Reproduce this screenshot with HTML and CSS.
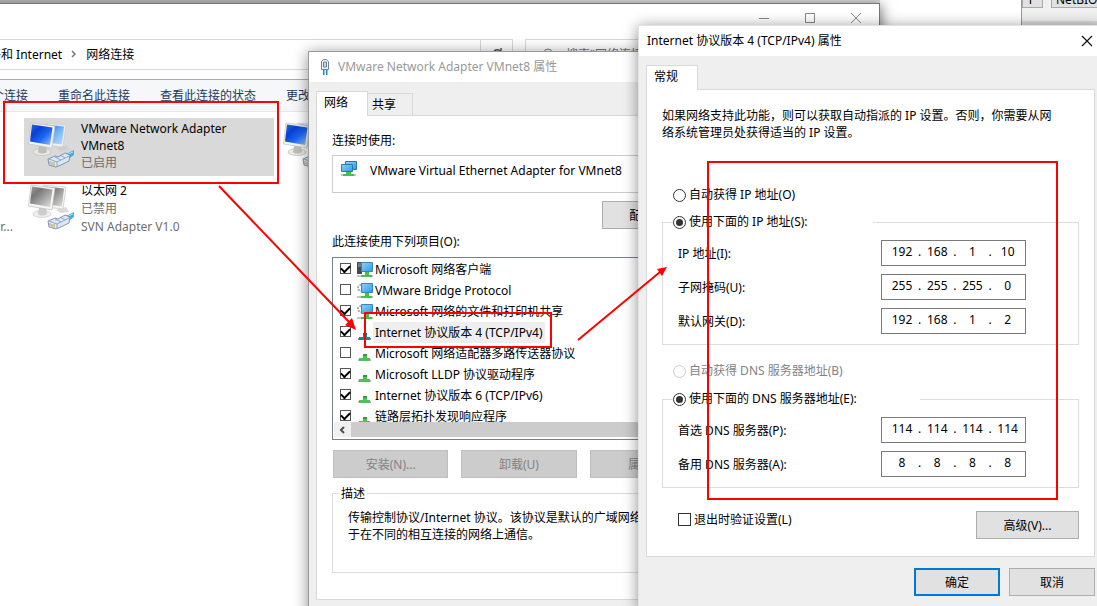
FILE: index.html
```html
<!DOCTYPE html>
<html lang="zh-CN">
<head>
<meta charset="utf-8">
<title>网络连接</title>
<link rel="stylesheet" href="styles.css">
</head>
<body>
<svg class="defs" width="0" height="0" aria-hidden="true">
  <defs>
    <linearGradient id="blue" x1="0" y1="0" x2="1" y2="1"><stop offset="0" stop-color="#2a6cf0"/><stop offset=".3" stop-color="#0a3fd0"/><stop offset=".6" stop-color="#1b66f5"/><stop offset="1" stop-color="#9acbff"/></linearGradient>
    <linearGradient id="blue2" x1="0" y1="0" x2="1" y2="1"><stop offset="0" stop-color="#0b55e6"/><stop offset=".5" stop-color="#6db0fb"/><stop offset="1" stop-color="#c5e2ff"/></linearGradient>
    <linearGradient id="gray" x1="0" y1="0" x2="1" y2="1"><stop offset="0" stop-color="#a0a0a0"/><stop offset=".3" stop-color="#777"/><stop offset=".6" stop-color="#a5a5a5"/><stop offset="1" stop-color="#e2e2e2"/></linearGradient>
    <linearGradient id="sky" x1="0" y1="0" x2="1" y2="1"><stop offset="0" stop-color="#8ed2fa"/><stop offset="1" stop-color="#2a9be8"/></linearGradient>
    <symbol id="plug" viewBox="0 0 28 18">
      <path d="M17 5l10-5v5l-6 4z" fill="#3fb2dc"/><path d="M19 5l7-3" stroke="#a7e5f7"/>
      <path d="M1 9l7-3 3 1 7-4 5 2-1 6-8 4-5 2-7-2z" fill="#dce6f5" stroke="#6680a6" stroke-width=".8"/>
      <path d="M2 9l8 3v4M10 12l12-6M8 7l6 3M13 5l5 3" fill="none" stroke="#7d97bd" stroke-width=".8"/>
      <path d="M3 11v3M5 12v3M7 12v4" stroke="#c4a94c"/>
    </symbol>
    <symbol id="pc-on" viewBox="0 0 48 46">
      <path d="M28 26l5 3 8-1-3-5z" fill="#cfcfcf"/>
      <path d="M15 1l23 2-3 22-18-2z" fill="#f1f1ee" stroke="#c9c9c4" stroke-width=".7"/><path d="M17 2.500l19 2-2 18-15-2z" fill="url(#blue2)"/>
      <ellipse cx="14" cy="30" rx="9" ry="3.500" fill="#e9e9e6" stroke="#bdbdb9" stroke-width=".7"/><path d="M11 24h7l1 6c-3 2-7 2-9 0z" fill="#bebebb"/>
      <path d="M3 1l24 3-3 22L.5 22z" fill="#f3f3f0" stroke="#c2c2bd" stroke-width=".7"/><path d="M4 2.500l20.500 3L22 23 2 19.500z" fill="url(#blue)"/>
      <use href="#plug" x="19" y="28" width="28" height="18"/>
    </symbol>
    <symbol id="pc-off" viewBox="0 0 48 46">
      <path d="M28 26l5 3 8-1-3-5z" fill="#dadada"/>
      <path d="M15 1l23 2-3 22-18-2z" fill="#f6f6f5" stroke="#c5c5c5" stroke-width=".7"/><path d="M17 2.500l19 2-2 18-15-2z" fill="url(#gray)"/>
      <ellipse cx="14" cy="30" rx="9" ry="3.500" fill="#eee" stroke="#c8c8c8" stroke-width=".7"/><path d="M11 24h7l1 6c-3 2-7 2-9 0z" fill="#ccc"/>
      <path d="M3 1l24 3-3 22L.5 22z" fill="#f6f6f5" stroke="#bbb" stroke-width=".7"/><path d="M4 2.500l20.500 3L22 23 2 19.500z" fill="url(#gray)"/>
      <use href="#plug" x="19" y="28" width="28" height="18"/>
    </symbol>
    <symbol id="client" viewBox="0 0 16 16"><path d="M0 0h5v12H0z" fill="#414a50"/><path d="M1 2h3M1 4h3" stroke="#aaa"/><path d="M4.500.5h11v9h-11z" fill="url(#sky)" stroke="#3a85b8"/><path d="M8 10h4v3h3v2H4v-2h4z" fill="#45c04c"/><path d="M0 13h4v2H0zM15 13h1v2h-1z" fill="#c5c5c5"/></symbol>
    <symbol id="service" viewBox="0 0 16 16"><circle cx="4" cy="5" r="3" fill="none" stroke="#a6adb2" stroke-width="2" stroke-dasharray="2 1"/><path d="M4.500.5h11v9h-11z" fill="url(#sky)" stroke="#3a85b8"/><path d="M8 10h4v3h3v2H4v-2h4z" fill="#45c04c"/><path d="M0 13h4v2H0zM15 13h1v2h-1z" fill="#c5c5c5"/></symbol>
    <symbol id="protocol" viewBox="0 0 16 16"><path d="M6 8h4v4h3v3H2v-3h4z" fill="#4cc356"/><path d="M6 8h4v2H6z" fill="#2f9e3b"/><path d="M1 13h1v2H1zM13 13h1v2h-1z" fill="#bbb"/></symbol>
    <symbol id="protocol-sel" viewBox="0 0 16 16"><path d="M6 8h4v4h3v3H2v-3h4z" fill="#168a8c"/><path d="M6 8h4v2H6z" fill="#0a6f7d"/><path d="M1 13h1v2H1zM13 13h1v2h-1z" fill="#7799b5"/></symbol>
    <symbol id="adapter" viewBox="0 0 16 16"><path d="M4.500.5h11v8h-11z" fill="url(#sky)" stroke="#2b78ae"/><path d="M.5 3.500h11v7H.5z" fill="url(#sky)" stroke="#2b78ae"/><path d="M5 11h5v2h3v2H2v-2h3z" fill="#45c04c"/><path d="M0 13h2v2H0zM13 13h2v2h-2z" fill="#c5c5c5"/></symbol>
  </defs>
</svg>

<main class="desktop">
  <section class="back-window">
    <div class="back-main"></div>
    <div class="back-side"><button class="back-button" type="button">P</button><button class="back-button" type="button">NetBIOS</button></div>
  </section>

  <section class="explorer" aria-label="网络连接">
    <header class="explorer-title">
      <button class="caption" type="button" aria-label="最小化"><svg width="12" height="12"><path d="M1 6.500h10" stroke="#888"/></svg></button>
      <button class="caption" type="button" aria-label="最大化"><svg width="12" height="12"><path d="M1.500 1.500h9v9h-9z" fill="none" stroke="#888"/></svg></button>
      <button class="caption" type="button" aria-label="关闭"><svg width="12" height="12"><path d="M1 1l10 10M11 1L1 11" stroke="#888"/></svg></button>
    </header>
    <div class="address-row">
      <nav class="address">
        <a href="#">网络和 Internet</a>
        <svg width="6" height="8"><path d="M1 1l3 3-3 3" fill="none" stroke="#777" stroke-width="1.500"/></svg>
        <a href="#">网络连接</a>
        <button class="refresh" type="button" aria-label="刷新"><svg width="12" height="12"><path d="M10 7a4 4 0 1 1-1-4M10 0v4H6" fill="none" stroke="#555" stroke-width="1.500"/></svg></button>
      </nav>
      <div class="search"><svg width="12" height="14"><circle cx="6" cy="5" r="4" fill="none" stroke="#777"/><path d="M3 8l-3 4" stroke="#777"/></svg><input type="text" aria-label="搜索" placeholder="搜索&quot;网络连接&quot;"></div>
    </div>
    <div class="toolbar"><button type="button">诊断这个连接</button><button type="button">重命名此连接</button><button type="button">查看此连接的状态</button><button type="button">更改此连接的设置</button></div>
    <div class="connections">
      <div class="column column-first"><span class="muted">r...</span></div>
      <div class="column">
        <article class="connection selected"><svg width="48" height="46"><use href="#pc-on"/></svg><div><p>VMware Network Adapter VMnet8</p><p class="muted">已启用</p></div></article>
        <article class="connection"><svg width="48" height="46"><use href="#pc-off"/></svg><div class="spaced"><p>以太网 2</p><p class="muted">已禁用</p><p class="muted">SVN Adapter V1.0</p></div></article>
      </div>
      <div class="column"><article class="connection third"><svg width="48" height="46"><use href="#pc-on"/></svg></article></div>
    </div>
  </section>

  <section class="dialog adapter-dialog" aria-label="VMware Network Adapter VMnet8 属性">
    <header class="title inactive"><svg width="10" height="16"><path d="M1.500 2.500l2-2h3l2 2v8h-7z" fill="#eef3f8" stroke="#6c8298"/><path d="M3.500 3v5h3V3z" fill="#c6d3e0" stroke="#6c8298"/><path d="M3 11h1.500v5H3zM6 11h1.500v5H6z" fill="#1d94bd"/></svg><h2>VMware Network Adapter VMnet8 属性</h2></header>
    <div class="tabs" role="tablist"><button class="tab active" role="tab" type="button">网络</button><button class="tab" role="tab" type="button">共享</button></div>
    <div class="panel adapter-panel">
      <p>连接时使用:</p>
      <div class="adapter-field"><svg width="16" height="16"><use href="#adapter"/></svg><span>VMware Virtual Ethernet Adapter for VMnet8</span></div>
      <button class="button configure" type="button">配置(C)...</button>
      <p class="list-label">此连接使用下列项目(O):</p>
      <div class="list">
        <div class="rows">
          <label class="row"><input type="checkbox" checked><svg width="16" height="16"><use href="#client"/></svg><span>Microsoft 网络客户端</span></label>
          <label class="row"><input type="checkbox"><svg width="16" height="16"><use href="#service"/></svg><span>VMware Bridge Protocol</span></label>
          <label class="row"><input type="checkbox" checked><svg width="16" height="16"><use href="#service"/></svg><span>Microsoft 网络的文件和打印机共享</span></label>
          <label class="row current"><input type="checkbox" checked><svg width="16" height="16"><use href="#protocol-sel"/></svg><span>Internet 协议版本 4 (TCP/IPv4)</span></label>
          <label class="row"><input type="checkbox"><svg width="16" height="16"><use href="#protocol"/></svg><span>Microsoft 网络适配器多路传送器协议</span></label>
          <label class="row"><input type="checkbox" checked><svg width="16" height="16"><use href="#protocol"/></svg><span>Microsoft LLDP 协议驱动程序</span></label>
          <label class="row"><input type="checkbox" checked><svg width="16" height="16"><use href="#protocol"/></svg><span>Internet 协议版本 6 (TCP/IPv6)</span></label>
          <label class="row"><input type="checkbox" checked><svg width="16" height="16"><use href="#protocol"/></svg><span>链路层拓扑发现响应程序</span></label>
        </div>
        <div class="scrollbar"><button type="button" aria-label="向左滚动"><svg width="7" height="8"><path d="M5 1L2 4l3 3" fill="none" stroke="#505050" stroke-width="2"/></svg></button></div>
      </div>
      <div class="list-actions"><button class="button" type="button" disabled>安装(N)...</button><button class="button" type="button" disabled>卸载(U)</button><button class="button" type="button" disabled>属性(R)</button></div>
      <fieldset class="description"><legend>描述</legend><p>传输控制协议/Internet 协议。该协议是默认的广域网络协议，用<br>于在不同的相互连接的网络上通信。</p></fieldset>
    </div>
  </section>

  <section class="dialog ip-dialog" aria-label="Internet 协议版本 4 (TCP/IPv4) 属性">
    <header class="title"><h2>Internet 协议版本 4 (TCP/IPv4) 属性</h2><button class="caption" type="button" aria-label="关闭"><svg width="12" height="12"><path d="M1 1l10 10M11 1L1 11" stroke="#111" stroke-width="1.200"/></svg></button></header>
    <div class="tabs" role="tablist"><button class="tab active" role="tab" type="button">常规</button></div>
    <div class="panel ip-panel">
      <p class="intro">如果网络支持此功能，则可以获取自动指派的 IP 设置。否则，你需要从网络系统管理员处获得适当的 IP 设置。</p>
      <label class="radio first-radio"><input type="radio" name="ip"><span>自动获得 IP 地址(O)</span></label>
      <fieldset class="group">
        <legend class="legend-ip"><label class="radio"><input type="radio" name="ip" checked><span>使用下面的 IP 地址(S):</span></label></legend>
        <div class="field"><label for="ip1">IP 地址(I):</label><div class="octets"><input id="ip1" value="192">.<input aria-label="IP 2" value="168">.<input aria-label="IP 3" value="1">.<input aria-label="IP 4" value="10"></div></div>
        <div class="field"><label for="mask1">子网掩码(U):</label><div class="octets"><input id="mask1" value="255">.<input aria-label="掩码 2" value="255">.<input aria-label="掩码 3" value="255">.<input aria-label="掩码 4" value="0"></div></div>
        <div class="field"><label for="gw1">默认网关(D):</label><div class="octets"><input id="gw1" value="192">.<input aria-label="网关 2" value="168">.<input aria-label="网关 3" value="1">.<input aria-label="网关 4" value="2"></div></div>
      </fieldset>
      <label class="radio dns-radio"><input type="radio" name="dns" disabled><span>自动获得 DNS 服务器地址(B)</span></label>
      <fieldset class="group">
        <legend class="legend-dns"><label class="radio"><input type="radio" name="dns" checked><span>使用下面的 DNS 服务器地址(E):</span></label></legend>
        <div class="field"><label for="dns1">首选 DNS 服务器(P):</label><div class="octets"><input id="dns1" value="114">.<input aria-label="首选 2" value="114">.<input aria-label="首选 3" value="114">.<input aria-label="首选 4" value="114"></div></div>
        <div class="field"><label for="alt1">备用 DNS 服务器(A):</label><div class="octets"><input id="alt1" value="8">.<input aria-label="备用 2" value="8">.<input aria-label="备用 3" value="8">.<input aria-label="备用 4" value="8"></div></div>
      </fieldset>
      <div class="panel-foot"><label class="validate"><input type="checkbox"><span>退出时验证设置(L)</span></label><button class="button" type="button">高级(V)...</button></div>
    </div>
    <footer class="actions"><button class="button primary" type="button">确定</button><button class="button" type="button">取消</button></footer>
  </section>

  <svg class="marks" width="1097" height="606" aria-hidden="true">
    <g fill="none" stroke="#f00" stroke-width="2">
      <path d="M4 102h274v81H4zM365 313h186v34H365zM708 162h349v337H708z"/>
      <path d="M219 186l132 138M578 340l82-68"/>
    </g>
    <path d="M356 330l-11-5 7-7zM667 267l-5 9-5-7z" fill="#f00"/>
  </svg>
</main>
</body>
</html>
```
FILE: styles.css
```css
* { box-sizing: border-box; }
body { margin: 0; font: 12px/17px "Noto Sans", "Noto Sans CJK SC", sans-serif; color: #000; }
p, h2 { margin: 0; font-size: 12px; font-weight: 400; }
button, input { font: inherit; color: inherit; }
button { padding: 0; border: 0; background: none; }
a { color: inherit; text-decoration: none; }
svg { display: block; flex: none; }
fieldset { margin: 0; padding: 0; min-width: 0; border: 1px solid #dcdcdc; }
legend { padding: 0; }
.defs { position: absolute; }
.desktop { position: relative; min-height: 100vh; overflow: hidden; background: #e6e6e0; }

/* windows behind the dialogs */
.back-window { position: absolute; inset: 0; display: flex; background: linear-gradient(90deg, #bdbdbd 320px, #dadada 320px); }
.back-main { flex: 1; margin-left: 880px; background: #fff; border-right: 1px solid #999; }
.back-side { width: 75px; height: 22px; display: flex; gap: 8px; background: #f0f0f0; border-bottom: 1px solid #ddd; overflow: hidden; }
.back-button { width: 21px; height: 18px; margin-top: -10px; flex: none; background: #e1e1e1; border: 1px solid #aaa; }
.back-button + .back-button { width: 90px; padding-left: 4px; text-align: left; }

.explorer { position: absolute; top: 3px; bottom: -10px; left: -52px; right: 217px; background: #fff; border: 1px solid #777; box-shadow: 2px 2px 12px rgba(0, 0, 0, .5); }
.explorer-title { display: flex; justify-content: flex-end; gap: 34px; height: 35px; padding: 8px 17px 0 0; }
.caption { display: block; height: 12px; }
.address-row { display: flex; gap: 12px; height: 31px; }
.address { display: flex; align-items: center; gap: 9px; width: 564px; padding: 0 0 1px 27px; border: 1px solid #d9d9d9; }
.refresh { display: grid; place-items: center; width: 32px; height: 29px; margin-left: auto; border-left: 1px solid #d9d9d9; }
.search { display: flex; flex: 1; align-items: center; gap: 10px; padding-left: 16px; border: 1px solid #d9d9d9; }
.search input { flex: 1; min-width: 0; border: 0; outline: 0; }
.toolbar { display: flex; align-items: center; gap: 30px; height: 33px; margin-top: 9px; padding-left: 7px; background: #f5f7f9; border-top: 1px solid #ababab; border-bottom: 1px solid #e4e6e8; color: #1e395b; overflow: hidden; }
.toolbar button { flex: none; }
.connections { display: flex; gap: 8px; padding-top: 6px; }
.column { flex: none; width: 250px; }
.column-first { width: 67px; padding: 100px 3px 0 0; text-align: right; white-space: nowrap; }
.connection { display: flex; gap: 5px; min-height: 58px; padding: 2px 8px 2px 4px; }
.connection svg { margin-top: 2px; }
.connection + .connection { padding-top: 6px; }
.third { padding-left: 1px; }
.selected { background: #d9d9d9; }
.spaced p { line-height: 18px; }
.muted { color: #6d6d6d; }

/* shared dialog parts */
.dialog { position: absolute; background: #efefef; border: 1px solid #9a9a9a; box-shadow: 0 2px 14px rgba(0, 0, 0, .45); }
.title { display: flex; align-items: center; justify-content: space-between; height: 30px; padding: 0 9px 1px 8px; background: #fff; }
.inactive { justify-content: flex-start; gap: 8px; padding-left: 11px; color: #999; }
.tabs { display: flex; align-items: flex-end; padding: 9px 7px 0; }
.tab { width: 45px; height: 22px; padding-left: 4px; text-align: left; border: 1px solid #d9d9d9; border-bottom: 0; border-left: 0; }
.tab.active { z-index: 1; width: 52px; height: 25px; margin-bottom: -1px; padding: 0 0 3px 7px; background: #fff; border-left: 1px solid #d9d9d9; }
.panel { margin: 0 7px; padding: 16px 15px; background: #fff; border: 1px solid #d9d9d9; }
.button { width: 103px; height: 28px; background: #e1e1e1; border: 1px solid #adadad; }
.button:disabled { background: #ccc; border-color: #bfbfbf; color: #838383; }
input[type="checkbox"], input[type="radio"] { display: grid; place-items: center; flex: none; margin: 0; appearance: none; background: #fff; border: 1px solid #333; }
input[type="checkbox"] { width: 13px; height: 13px; }
input[type="radio"] { width: 13px; height: 13px; border-radius: 50%; }
input[type="radio"]:checked::before { content: ""; width: 7px; height: 7px; border-radius: 50%; background: #333; }
input[type="radio"]:disabled { border-color: #ccc; }
input[type="radio"]:disabled + span { color: #838383; }

.adapter-dialog { top: 51px; left: 308px; width: 421px; padding-bottom: 40px; }
.adapter-panel { padding-bottom: 26px; }
.adapter-field { display: flex; gap: 13px; height: 38px; margin-top: 6px; padding: 5px 8px; border: 1px solid #ccc; }
.adapter-field span { padding-top: 1px; white-space: nowrap; }
.configure { display: block; margin: 8px 0 0 auto; }
.list-label { margin-top: 4px; }
.list { margin-top: 7px; border: 1px solid #7a7f88; }
.rows { height: 164px; padding-top: 1px; overflow: hidden; }
.row { display: flex; align-items: center; height: 21px; padding-left: 7px; white-space: nowrap; }
.row input[type="checkbox"] { width: 11px; height: 11px; margin: 0 6px 2px 0; border-color: #555; }
.row input:checked::before { content: ""; width: 7px; height: 4px; margin-bottom: 2px; border: solid #000; border-width: 0 0 2px 2px; transform: rotate(-45deg); }
.row span { padding: 2px; }
.current span { background: #efefef; }
.scrollbar { height: 17px; padding: 0 1px 2px; background: #ccc content-box; }
.scrollbar button { display: grid; place-items: center; width: 17px; height: 15px; background: #f0f0f0; }
.list-actions { display: flex; gap: 13px; margin: 10px 0 0 1px; }
.list-actions .button { flex: 1; }
.description { height: 88px; margin-top: 7px; padding: 7px 0 7px 15px; }
.description legend { margin-left: -9px; padding: 0 2px; }

.ip-dialog { top: 25px; left: 638px; right: -6px; border-color: #e2e2e2; }
.ip-panel { padding: 17px 15px; }
.intro { padding-right: 20px; }
.radio { display: flex; align-items: center; gap: 3px; height: 18px; }
.radio span { padding-bottom: 2px; }
.first-radio { margin: 45px 0 9px 11px; }
.dns-radio { margin: 17px 0 10px 11px; }
.group { padding: 9px 0 10px 15px; }
.group legend { margin-left: -5px; }
.legend-ip { width: 200px; }
.legend-dns { width: 247px; }
.field { display: flex; align-items: center; justify-content: space-between; height: 26px; padding-right: 52px; }
.field + .field { margin-top: 8px; }
.octets { display: flex; align-items: center; width: 145px; height: 26px; padding: 0 4px 3px; border: 1px solid #7a7a7a; background: #fff; }
.octets input { width: 32px; height: 20px; padding: 0; border: 0; outline: 0; text-align: center; background: none; }
.panel-foot { display: flex; justify-content: space-between; align-items: flex-start; margin: 23px 0 0 16px; }
.validate { display: flex; align-items: center; gap: 3px; }
.actions { display: flex; justify-content: flex-end; gap: 9px; padding: 11px 7px 10px; }
.actions .button { width: 86px; }
.actions .primary { border: 2px solid #0078d7; }

.marks { position: absolute; top: 0; left: 0; pointer-events: none; }
```
